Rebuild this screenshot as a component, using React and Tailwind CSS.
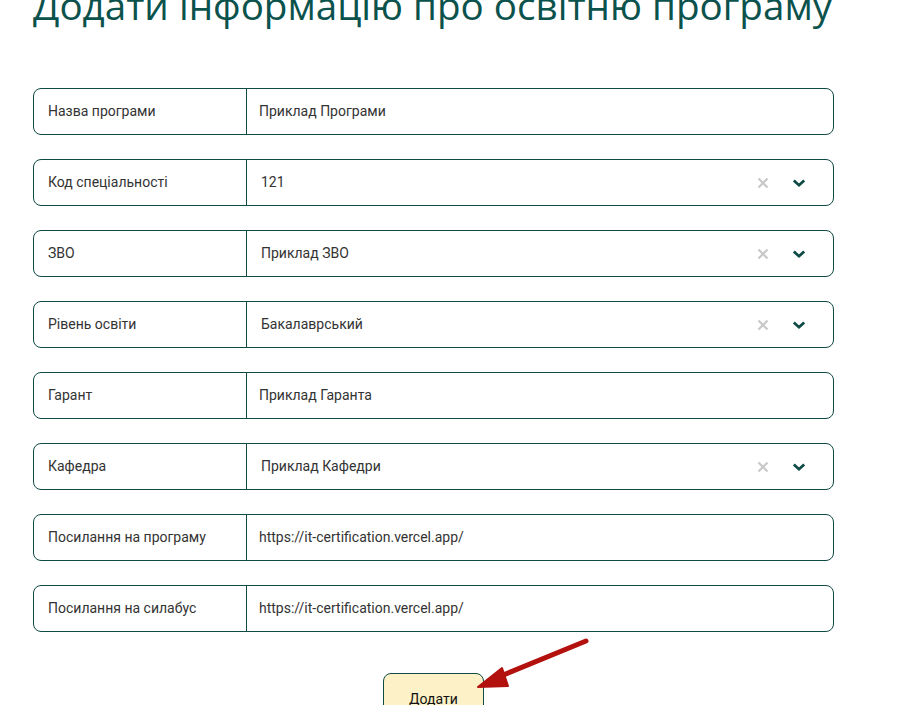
import React from 'react';

const fields = [
  { label: 'Назва програми', value: 'Приклад Програми' },
  { label: 'Код спеціальності', value: '121', select: true },
  { label: 'ЗВО', value: 'Приклад ЗВО', select: true },
  { label: 'Рівень освіти', value: 'Бакалаврський', select: true },
  { label: 'Гарант', value: 'Приклад Гаранта' },
  { label: 'Кафедра', value: 'Приклад Кафедри', select: true },
  { label: 'Посилання на програму', value: 'https://it-certification.vercel.app/' },
  { label: 'Посилання на силабус', value: 'https://it-certification.vercel.app/' },
];

const Row = ({ label, value, select }) => (
  <div className="flex h-[47px] w-[801px] rounded-lg border border-[#0f4a45] bg-white">
    <div className="flex w-[213px] items-center border-r border-[#0f4a45] pl-[14px] text-[14px] text-[#333]">
      {label}
    </div>
    <div className={`flex flex-1 items-center text-[14px] text-[#333] ${select ? 'pl-[14px]' : 'pl-[12px]'}`}>
      <span className="flex-1">{value}</span>
      {select && (
        <div className="flex items-center gap-[23px] pr-[27px]">
          <svg width="12" height="12" viewBox="0 0 12 12">
            <path d="M1.5 1.5 L10.5 10.5 M10.5 1.5 L1.5 10.5" stroke="#c8c8c8" strokeWidth="2.2" />
          </svg>
          <svg width="14" height="10" viewBox="0 0 14 10">
            <path d="M1.8 2.5 L7 7.2 L12.2 2.5" stroke="#0f4a45" strokeWidth="2.8" fill="none" />
          </svg>
        </div>
      )}
    </div>
  </div>
);

export default function App() {
  return (
    <div className="relative h-[705px] w-[897px] overflow-hidden bg-white" style={{ fontFamily: 'Roboto, "Liberation Sans", sans-serif' }}>
      <h1
        className="mt-[-18px] pl-[33px] text-[38.6px] leading-[46px] text-[#0b524c]"
        style={{ fontFamily: '"Open Sans", "Noto Sans", sans-serif' }}
      >
        Додати інформацію про освітню програму
      </h1>
      <div className="mt-[60px] flex flex-col gap-[24px] pl-[33px]">
        {fields.map((f) => (
          <Row key={f.label} {...f} />
        ))}
      </div>
      <div className="flex w-[834px] justify-center pl-[33px] pt-[41px]">
        <button className="h-[50px] w-[101px] rounded-lg border border-[#0f4a45] bg-[#fdf1c7] pt-[2px] text-[14px] font-normal text-[#111]">
          Додати
        </button>
      </div>
      <svg className="absolute left-[470px] top-[630px]" width="130" height="70" viewBox="0 0 130 70">
        <path d="M116 11 L26 48" stroke="#b3110d" strokeWidth="5" strokeLinecap="round" />
        <path d="M8 57 L32 38 L38 56 Z" fill="#b3110d" stroke="#b3110d" strokeWidth="2" strokeLinejoin="round" />
      </svg>
    </div>
  );
}
